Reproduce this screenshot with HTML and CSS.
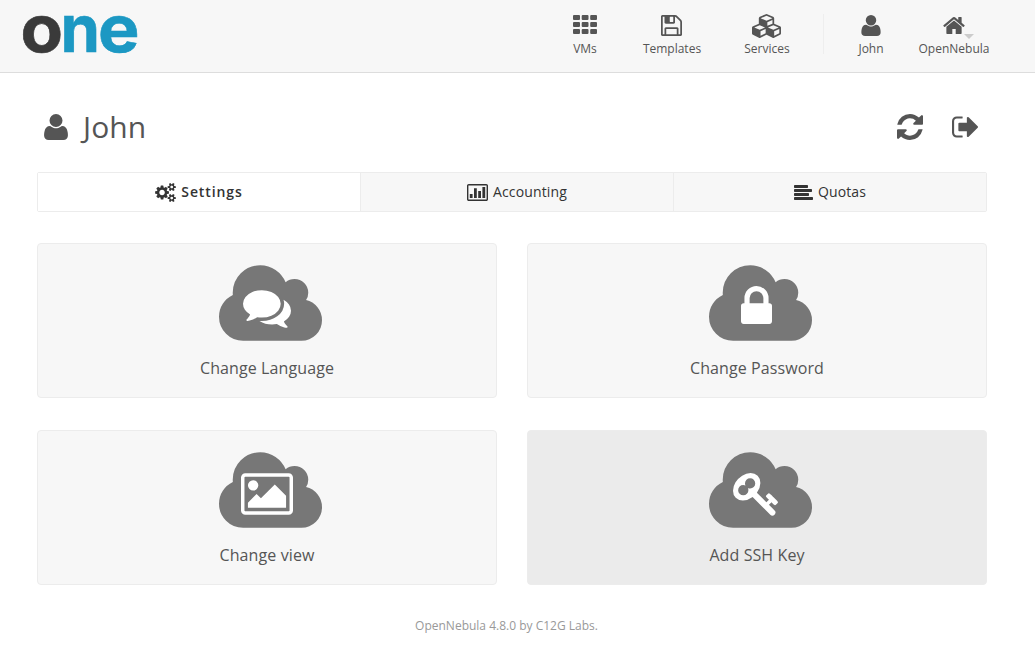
FILE: index.html
```
<!DOCTYPE html>
<html lang="en">
<head>
<meta charset="utf-8">
<title>OpenNebula</title>
<link rel="stylesheet" href="styles.css">
</head>
<body>
<svg class="sprite" aria-hidden="true">
  <symbol id="th" viewBox="0 0 24 19" preserveAspectRatio="none"><path d="M1 0h5q1 0 1 1v3q0 1-1 1h-5q-1 0-1-1v-3q0-1 1-1zm8.700 0h4.800q1 0 1 1v3q0 1-1 1h-4.800q-1 0-1-1v-3q0-1 1-1zm8.500 0h4.800q1 0 1 1v3q0 1-1 1h-4.800q-1 0-1-1v-3q0-1 1-1zM1 7h5q1 0 1 1v3q0 1-1 1h-5q-1 0-1-1v-3q0-1 1-1zm8.700 0h4.800q1 0 1 1v3q0 1-1 1h-4.800q-1 0-1-1v-3q0-1 1-1zm8.500 0h4.800q1 0 1 1v3q0 1-1 1h-4.800q-1 0-1-1v-3q0-1 1-1zM1 14h5q1 0 1 1v3q0 1-1 1h-5q-1 0-1-1v-3q0-1 1-1zm8.700 0h4.800q1 0 1 1v3q0 1-1 1h-4.800q-1 0-1-1v-3q0-1 1-1zm8.500 0h4.800q1 0 1 1v3q0 1-1 1h-4.800q-1 0-1-1v-3q0-1 1-1z"/></symbol>
  <symbol id="floppy" viewBox="0 0 1536 1536"><path fill-rule="evenodd" transform="matrix(1 0 0 -1 0 1408)" d="M384 0h768v384h-768v-384zM1280 0h128v896q0 14 -10 38.5t-20 34.5l-281 281q-10 10 -34 20t-39 10v-416q0 -40 -28 -68t-68 -28h-576q-40 0 -68 28t-28 68v416h-128v-1280h128v416q0 40 28 68t68 28h832q40 0 68 -28t28 -68v-416zM896 928v320q0 13 -9.5 22.5t-22.5 9.5h-192q-13 0 -22.5 -9.5t-9.5 -22.5v-320q0 -13 9.5 -22.5t22.5 -9.5h192q13 0 22.5 9.5t9.5 22.5zM1536 896v-928q0 -40 -28 -68t-68 -28h-1344q-40 0 -68 28t-28 68v1344q0 40 28 68t68 28h928q40 0 88 -20t76 -48l280 -280q28 -28 48 -76t20 -88z"/></symbol>
  <symbol id="cubes" viewBox="0 0 2176 1792"><path fill-rule="evenodd" transform="matrix(1 0 0 -1 0 1536)" d="M640 -96l384 192v314l-384 -164v-342zM576 358l404 173l-404 173l-404 -173zM1664 -96l384 192v314l-384 -164v-342zM1600 358l404 173l-404 173l-404 -173zM1152 651l384 165v266l-384 -164v-267zM1088 1030l441 189l-441 189l-441 -189zM2176 512v-416q0 -36 -19 -67t-52 -47l-448 -224q-25 -14 -57 -14t-57 14l-448 224q-5 2 -7 4q-2 -2 -7 -4l-448 -224q-25 -14 -57 -14t-57 14l-448 224q-33 16 -52 47t-19 67v416q0 38 21.500 70t56.500 48l434 186v400q0 38 21.500 70t56.500 48l448 192q23 10 50 10t50 -10l448 -192q35 -16 56.500 -48t21.500 -70v-400l434 -186q36 -16 57 -48t21 -70z"/></symbol>
  <symbol id="user" viewBox="0 0 1408 1536"><path transform="matrix(1 0 0 -1 0 1408)" d="M1408 131q0 -120 -73 -189.5t-194 -69.5h-874q-121 0 -194 69.5t-73 189.5q0 53 3.5 103.5t14 109t26.5 108.5t43 97.5t62 81t85.500 53.500t111.500 20q9 0 42 -21.500t74.500 -48t108 -48t133.500 -21.500t133.500 21.500t108 48t74.500 48t42 21.500q61 0 111.500 -20t85.500 -53.500t62 -81t43 -97.500t26.500 -108.500t14 -109t3.500 -103.500zM1088 1024q0 -159 -112.500 -271.500t-271.500 -112.500t-271.500 112.500t-112.500 271.500t112.500 271.500t271.500 112.500t271.500 -112.500t112.500 -271.500z"/></symbol>
  <symbol id="home" viewBox="12 0 1640 1283"><path transform="matrix(1 0 0 -1 0 1283)" d="M1408 544v-480q0 -26 -19 -45t-45 -19h-384v384h-256v-384h-384q-26 0 -45 19t-19 45v480q0 1 0.500 3t0.500 3l575 474l575 -474q1 -2 1 -6zM1631 613l-62 -74q-8 -9 -21 -11h-3q-13 0 -21 7l-692 577l-692 -577q-12 -8 -24 -7q-13 2 -21 11l-62 74q-8 10 -7 23.500t11 21.500l719 599q32 26 76 26t76 -26l244 -204v195q0 14 9 23t23 9h192q14 0 23 -9t9 -23v-408l219 -182q10 -8 11 -21.500t-7 -23.500z"/></symbol>
  <symbol id="refresh" viewBox="0 0 1536 1536"><path transform="matrix(1 0 0 -1 0 1408)" d="M1511 480q0 -5 -1 -7q-64 -268 -268 -434.500t-478 -166.500q-146 0 -282.500 55t-243.500 157l-129 -129q-19 -19 -45 -19t-45 19t-19 45v448q0 26 19 45t45 19h448q26 0 45 -19t19 -45t-19 -45l-137 -137q71 -66 161 -102t187 -36q134 0 250 65t186 179q11 17 53 117q8 23 30 23h192q13 0 22.500 -9.500t9.500 -22.500zM1536 1280v-448q0 -26 -19 -45t-45 -19h-448q-26 0 -45 19t-19 45t19 45l138 138q-148 137 -349 137q-134 0 -250 -65t-186 -179q-11 -17 -53 -117q-8 -23 -30 -23h-199q-13 0 -22.500 9.500t-9.500 22.500v7q65 268 270 434.500t480 166.500q146 0 284 -55.500t245 -156.500l130 129q19 19 45 19t45 -19t19 -45z"/></symbol>
  <symbol id="signout" viewBox="0 0 1568 1280"><path transform="matrix(1 0 0 -1 0 1280)" d="M640 96q0 -4 1 -20t0.500 -26.500t-3 -23.500t-10 -19.500t-20.500 -6.500h-320q-119 0 -203.500 84.500t-84.500 203.500v704q0 119 84.500 203.500t203.500 84.500h320q13 0 22.500 -9.500t9.500 -22.500q0 -4 1 -20t0.500 -26.500t-3 -23.500t-10 -19.500t-20.500 -6.500h-320q-66 0 -113 -47t-47 -113v-704q0 -66 47 -113t113 -47h288h11h13t11.500 -1t11.500 -3t8 -5.500t7 -9t2 -13.500zM1568 640q0 -26 -19 -45l-544 -544q-19 -19 -45 -19t-45 19t-19 45v288h-448q-26 0 -45 19t-19 45v384q0 26 19 45t45 19h448v288q0 26 19 45t45 19t45 -19l544 -544q19 -19 19 -45z"/></symbol>
  <symbol id="cogs" viewBox="0 0 1920 1760"><path fill-rule="evenodd" transform="matrix(1 0 0 -1 0 1520)" d="M896 640q0 106 -75 181t-181 75t-181 -75t-75 -181t75 -181t181 -75t181 75t75 181zM1664 128q0 52 -38 90t-90 38t-90 -38t-38 -90q0 -53 37.500 -90.500t90.500 -37.500t90.500 37.500t37.500 90.500zM1664 1152q0 52 -38 90t-90 38t-90 -38t-38 -90q0 -53 37.500 -90.500t90.500 -37.500t90.500 37.500t37.500 90.500zM1280 731v-185q0 -10 -7 -19.500t-16 -10.500l-155 -24q-11 -35 -32 -76q34 -48 90 -115q7 -11 7 -20q0 -12 -7 -19q-23 -30 -82.500 -89.500t-78.500 -59.500q-11 0 -21 7l-115 90q-37 -19 -77 -31q-11 -108 -23 -155q-7 -24 -30 -24h-186q-11 0 -20 7.500t-10 17.500l-23 153q-34 10 -75 31l-118 -89q-7 -7 -20 -7q-11 0 -21 8q-144 133 -144 160q0 9 7 19q10 14 41 53t47 61q-23 44 -35 82l-152 24q-10 1 -17 9.500t-7 19.500v185q0 10 7 19.500t16 10.500l155 24q11 35 32 76q-34 48 -90 115q-7 11 -7 20q0 12 7 20q22 30 82 89t79 59q11 0 21 -7l115 -90q34 18 77 32q11 108 23 154q7 24 30 24h186q11 0 20 -7.500t10 -17.500l23 -153q34 -10 75 -31l118 89q8 7 20 7q11 0 21 -8q144 -133 144 -160q0 -8 -7 -19q-12 -16 -42 -54t-45 -60q23 -48 34 -82l152 -23q10 -2 17 -10.500t7 -19.500zM1920 198v-140q0 -16 -149 -31q-12 -27 -30 -52q51 -113 51 -138q0 -4 -4 -7q-122 -71 -124 -71q-8 0 -46 47t-52 68q-20 -2 -30 -2t-30 2q-14 -21 -52 -68t-46 -47q-2 0 -124 71q-4 3 -4 7q0 25 51 138q-18 25 -30 52q-149 15 -149 31v140q0 16 149 31q13 29 30 52q-51 113 -51 138q0 4 4 7q4 2 35 20t59 34t30 16q8 0 46 -46.500t52 -67.500q20 2 30 2t30 -2q51 71 92 112l6 2q4 0 124 -70q4 -3 4 -7q0 -25 -51 -138q17 -23 30 -52q149 -15 149 -31zM1920 1222v-140q0 -16 -149 -31q-12 -27 -30 -52q51 -113 51 -138q0 -4 -4 -7q-122 -71 -124 -71q-8 0 -46 47t-52 68q-20 -2 -30 -2t-30 2q-14 -21 -52 -68t-46 -47q-2 0 -124 71q-4 3 -4 7q0 25 51 138q-18 25 -30 52q-149 15 -149 31v140q0 16 149 31q13 29 30 52q-51 113 -51 138q0 4 4 7q4 2 35 20t59 34t30 16q8 0 46 -46.500t52 -67.500q20 2 30 2t30 -2q51 71 92 112l6 2q4 0 124 -70q4 -3 4 -7q0 -25 -51 -138q17 -23 30 -52q149 -15 149 -31z"/></symbol>
  <symbol id="chart" viewBox="0 0 1920 1536"><path fill-rule="evenodd" transform="matrix(1 0 0 -1 0 1408)" d="M512 512v-384h-256v384h256zM896 1024v-896h-256v896h256zM1280 768v-640h-256v640h256zM1664 1152v-1024h-256v1024h256zM1760 1280h-1600q-13 0 -22.500 -9.500t-9.500 -22.500v-1216q0 -13 9.500 -22.500t22.500 -9.500h1600q13 0 22.500 9.500t9.500 22.500v1216q0 13 -9.500 22.500t-22.500 9.500zM1920 1248v-1216q0 -66 -47 -113t-113 -47h-1600q-66 0 -113 47t-47 113v1216q0 66 47 113t113 47h1600q66 0 113 -47t47 -113z"/></symbol>
  <symbol id="align" viewBox="0 0 19 15"><rect width="14" height="3" rx=".7"/><rect y="4" width="18" height="3" rx=".7"/><rect y="8" width="15" height="3" rx=".7"/><rect y="12" width="19" height="3" rx=".7"/></symbol>
  <symbol id="cloud" viewBox="0 0 1920 1408"><path transform="matrix(1 0 0 -1 0 1408)" d="M1920 384q0 -159 -112.500 -271.500t-271.500 -112.500h-1088q-185 0 -316.500 131.500t-131.500 316.500q0 132 71 241.500t187 163.500q-2 28 -2 43q0 212 150 362t362 150q158 0 286.500 -88t187.500 -230q70 62 166 62q106 0 181 -75t75 -181q0 -75 -41 -138q129 -30 213 -134.500t84 -239.500z"/></symbol>
  <symbol id="comments" viewBox="0 0 1792 1408"><path transform="matrix(1 0 0 -1 0 1280)" d="M1408 768q0 -139 -94 -257t-256.500 -186.500t-353.500 -68.500q-86 0 -176 16q-124 -88 -278 -128q-36 -9 -86 -16h-3q-11 0 -20.500 8t-11.500 21q-1 3 -1 6.500t0.500 6.500t2 6l2.500 5t3.500 5.500t4 5t4.500 5t4 4.500q5 6 23 25t26 29.500t22.500 29t25 38.500t20.500 44q-124 72 -195 177t-71 224q0 139 94 257t256.500 186.500t353.500 68.500t353.500 -68.500t256.500 -186.500t94 -257zM1792 512q0 -120 -71 -224.500t-195 -176.500q10 -24 20.500 -44t25 -38.500t22.500 -29t26 -29.500t23 -25q1 -1 4 -4.500t4.500 -5t4 -5t3.500 -5.500l2.500 -5t2 -6t0.500 -6.500t-1 -6.500q-3 -14 -13 -22t-22 -7q-50 7 -86 16q-154 40 -278 128q-90 -16 -176 -16q-271 0 -472 132q58 -4 88 -4q161 0 309 45t264 129q125 92 192 212t67 254q0 77 -23 152q129 -71 204 -178t75 -230z"/></symbol>
  <symbol id="lock" viewBox="0 0 1152 1408"><path fill-rule="evenodd" transform="matrix(1 0 0 -1 0 1408)" d="M320 768h512v192q0 106 -75 181t-181 75t-181 -75t-75 -181v-192zM1152 672v-576q0 -40 -28 -68t-68 -28h-960q-40 0 -68 28t-28 68v576q0 40 28 68t68 28h32v192q0 184 132 316t316 132t316 -132t132 -316v-192h32q40 0 68 -28t28 -68z"/></symbol>
  <symbol id="picture" viewBox="0 0 1920 1536"><path fill-rule="evenodd" transform="matrix(1 0 0 -1 0 1408)" d="M640 960q0 -80 -56 -136t-136 -56t-136 56t-56 136t56 136t136 56t136 -56t56 -136zM1664 576v-448h-1408v192l320 320l160 -160l512 512zM1760 1280h-1600q-13 0 -22.500 -9.500t-9.500 -22.500v-1216q0 -13 9.500 -22.500t22.500 -9.500h1600q13 0 22.500 9.500t9.500 22.500v1216q0 13 -9.500 22.500t-22.500 9.500zM1920 1248v-1216q0 -66 -47 -113t-113 -47h-1600q-66 0 -113 47t-47 113v1216q0 66 47 113t113 47h1600q66 0 113 -47t47 -113z"/></symbol>
  <symbol id="key" viewBox="0 0 1683 1600"><path fill-rule="evenodd" transform="matrix(1 0 0 -1 0 1408)" d="M832 1024q0 80 -56 136t-136 56t-136 -56t-56 -136q0 -42 19 -83q-41 19 -83 19q-80 0 -136 -56t-56 -136t56 -136t136 -56t136 56t56 136q0 42 -19 83q41 -19 83 -19q80 0 136 56t56 136zM1683 320q0 -17 -49 -66t-66 -49q-9 0 -28.500 16t-36.500 33t-38.500 40t-24.500 26l-96 -96l220 -220q28 -28 28 -68q0 -42 -39 -81t-81 -39q-40 0 -68 28l-671 671q-176 -131 -365 -131q-163 0 -265.500 102.500t-102.500 265.500q0 160 95 313t248 248t313 95q163 0 265.500 -102.500t102.500 -265.500q0 -189 -131 -365l355 -355l96 96q-3 3 -26 24.500t-40 38.500t-33 36.500t-16 28.500q0 17 49 66t66 49q13 0 23 -10q6 -6 46 -44.500t82 -79.500t86.500 -86t73 -78t28.500 -41z"/></symbol>
</svg>

<header class="topbar">
  <svg class="logo" viewBox="0 0 150 72" role="img" aria-label="one">
    <text class="logo-dark" x="20.500" y="52" textLength="42.500" lengthAdjust="spacingAndGlyphs">o</text>
    <text class="logo-blue" x="60.500" y="52" textLength="39.500" lengthAdjust="spacingAndGlyphs">n</text>
    <text class="logo-blue" x="98" y="52" textLength="41.500" lengthAdjust="spacingAndGlyphs">e</text>
  </svg>
  <nav class="menu">
    <a class="menu-item"><span class="menu-icon"><svg class="i-th"><use href="#th"/></svg></span>VMs</a>
    <a class="menu-item"><span class="menu-icon"><svg class="i-floppy"><use href="#floppy"/></svg></span>Templates</a>
    <a class="menu-item"><span class="menu-icon"><svg class="i-cubes"><use href="#cubes"/></svg></span>Services</a>
    <span class="menu-divider"></span>
    <a class="menu-item"><span class="menu-icon"><svg class="i-user"><use href="#user"/></svg></span>John</a>
    <a class="menu-item"><span class="menu-icon"><svg class="i-home"><use href="#home"/></svg><span class="caret"></span></span>OpenNebula</a>
  </nav>
</header>

<main class="page">
  <div class="title-row">
    <svg class="title-icon"><use href="#user"/></svg>
    <h1 class="title">John</h1>
    <svg class="act-refresh"><use href="#refresh"/></svg>
    <svg class="act-signout"><use href="#signout"/></svg>
  </div>

  <div class="tabs">
    <a class="tab tab-active"><svg class="i-cogs"><use href="#cogs"/></svg>Settings</a>
    <a class="tab"><svg class="i-chart"><use href="#chart"/></svg>Accounting</a>
    <a class="tab"><svg class="i-align"><use href="#align"/></svg>Quotas</a>
  </div>

  <div class="cards">
    <a class="card"><span class="cloud-box"><svg class="cloud"><use href="#cloud"/></svg><svg class="glyph g-comments"><use href="#comments"/></svg></span><span class="card-label">Change Language</span></a>
    <a class="card"><span class="cloud-box"><svg class="cloud"><use href="#cloud"/></svg><svg class="glyph g-lock"><use href="#lock"/></svg></span><span class="card-label">Change Password</span></a>
    <a class="card"><span class="cloud-box"><svg class="cloud"><use href="#cloud"/></svg><svg class="glyph g-picture"><use href="#picture"/></svg></span><span class="card-label">Change view</span></a>
    <a class="card card-hover"><span class="cloud-box"><svg class="cloud"><use href="#cloud"/></svg><svg class="glyph g-key"><use href="#key"/></svg></span><span class="card-label">Add SSH Key</span></a>
  </div>
</main>

<footer class="footer">OpenNebula 4.8.0 by C12G Labs.</footer>
</body>
</html>
```

FILE: styles.css
```
* { box-sizing: border-box; }
body {
  margin: 0;
  height: 658px;
  overflow: hidden;
  background: #fff;
  color: #555;
  font-family: "Open Sans", "Noto Sans", sans-serif;
}
svg { display: block; fill: currentColor; flex: none; }
.sprite { position: absolute; width: 0; height: 0; }

.topbar {
  height: 73px;
  background: #f7f7f7;
  border-bottom: 1px solid #ddd;
  display: flex;
  justify-content: space-between;
  padding-right: 27px;
}
.logo { width: 150px; height: 72px; overflow: visible; font: 700 66px Inter, sans-serif; }
.logo text { stroke-width: .6px; }
.logo-dark { fill: #3a3a3a; stroke: #3a3a3a; }
.logo-blue { fill: #1c98c3; stroke: #1c98c3; }

.menu { display: grid; grid-template-columns: 60px 114px 76px 37px 58px 108px; }
.menu-item {
  display: flex;
  flex-direction: column;
  align-items: center;
  padding-top: 14px;
  font-size: 12px;
  line-height: 22px;
}
.menu-icon { position: relative; height: 24px; display: flex; align-items: center; }
.menu-divider { width: 1px; height: 40px; margin: 14px auto 0; background: #eee; }
.i-th { width: 24px; height: 19px; margin-bottom: 3px; }
.i-floppy { width: 21px; height: 21px; margin: 0 1px 1px 0; }
.i-cubes { width: 29px; height: 24px; margin-right: 1px; }
.i-user { width: 20px; height: 21px; margin-bottom: 1px; }
.i-home { width: 22px; height: 17px; margin-bottom: 1px; }
.caret {
  position: absolute;
  left: 21px;
  top: 20px;
  border: 5px solid transparent;
  border-top-color: #ccc;
  border-bottom: 0;
}

.page { width: 950px; margin-left: 37px; }
.title-row { height: 99px; padding: 8px 9px 0 7px; display: flex; align-items: center; }
.title-icon { width: 24px; height: 26px; }
.title {
  margin: 0 auto 0 15px;
  font-size: 30px;
  font-weight: 400;
  line-height: 40px;
  letter-spacing: .1px;
}
.act-refresh { width: 26px; height: 26px; margin-right: 29px; }
.act-signout { width: 26px; height: 22px; }

.tabs {
  height: 40px;
  display: grid;
  grid-template-columns: 322px 313px 313px;
  border: 1px solid #ececec;
  border-radius: 2px;
  color: #333;
}
.tab {
  display: flex;
  align-items: center;
  justify-content: center;
  gap: 5px;
  padding-bottom: 2px;
  background: #f7f7f7;
  font-size: 14px;
  letter-spacing: .15px;
  border-left: 1px solid #ececec;
}
.tab svg { position: relative; top: 1px; }
.tab-active { background: #fff; font-weight: 600; letter-spacing: .9px; border-left: 0; }
.i-cogs { width: 21px; height: 19px; }
.i-chart { width: 21px; height: 17px; }
.i-align { width: 19px; height: 15px; }

.cards {
  margin-top: 31px;
  display: grid;
  grid-template-columns: 460px 460px;
  grid-auto-rows: 155px;
  gap: 32px 30px;
}
.card {
  display: flex;
  flex-direction: column;
  align-items: center;
  padding-top: 21px;
  border: 1px solid #ececec;
  border-radius: 4px;
  background: #f7f7f7;
}
.card-hover { background: #ebebeb; }
.cloud-box { position: relative; width: 103px; height: 76px; margin-left: 7px; color: #777; }
.cloud { width: 103px; height: 76px; }
.glyph { position: absolute; color: #fff; }
.g-comments { left: 24px; top: 25px; width: 48px; height: 38px; }
.g-lock { left: 32px; top: 21px; width: 31px; height: 38px; }
.g-picture { left: 22px; top: 21px; width: 52px; height: 42px; }
.g-key { left: 24px; top: 21px; width: 45px; height: 43px; }
.card-label { margin-top: 15px; font-size: 16px; line-height: 24px; letter-spacing: .1px; }

.footer {
  margin-top: 30px;
  width: 1013px;
  text-align: center;
  font-size: 12px;
  line-height: 22px;
  color: #999;
}
```
